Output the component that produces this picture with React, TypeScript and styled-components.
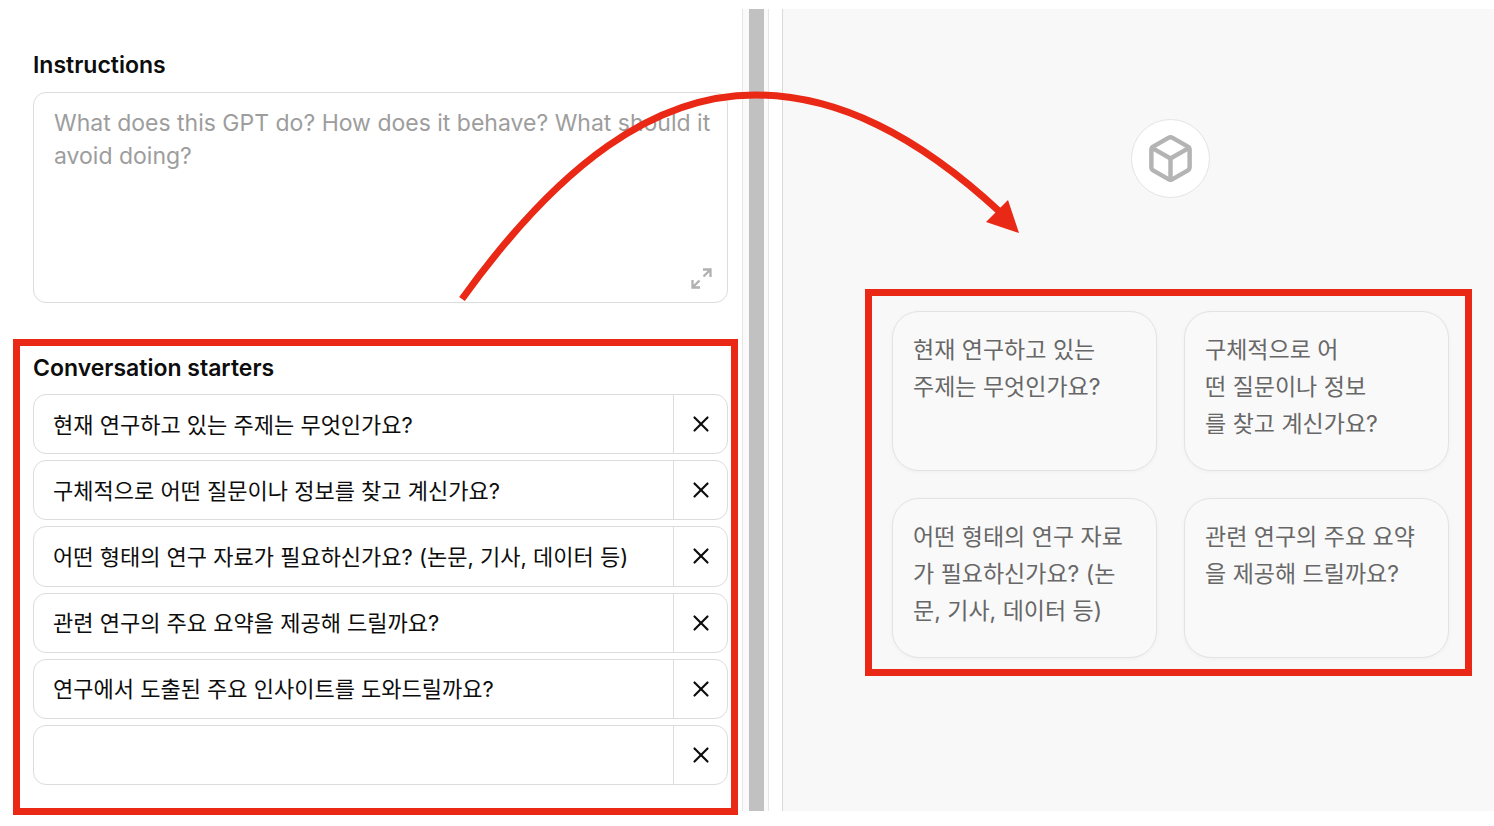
import React, { useState } from "react";
import styled, { createGlobalStyle } from "styled-components";
import { Box, X } from "lucide-react";

const RED = "#e92815";
const LINE = "#dcdcdc";

const GlobalStyle = createGlobalStyle`
  *, *::before, *::after { box-sizing: border-box; }
  body {
    margin: 0;
    background: #fff;
    color: #0d0d0d;
    font-family: Inter, "Noto Sans CJK KR", sans-serif;
  }
  button, input, textarea { font: inherit; color: inherit; margin: 0; }
`;

const Page = styled.main`
  position: relative;
  display: grid;
  grid-template-columns: minmax(0, 742fr) 27px 13px minmax(0, 712fr);
  min-height: 100vh;
  padding: 9px 0 11px;
  overflow: hidden;
`;

const Editor = styled.section`
  display: flex;
  flex-direction: column;
  padding: 40px 4px 0 13px;
`;

const Label = styled.label`
  display: block;
  font-size: 23px;
  font-weight: 600;
  line-height: 32px;
`;

const Heading = styled.h2`
  margin: 0;
  font-size: 23px;
  font-weight: 600;
  line-height: 32px;
`;

const InstructionsField = styled.div`
  position: relative;
  display: flex;
  flex-direction: column;
  gap: 11px;
  margin: 0 10px 36px 20px;
`;

const TextArea = styled.textarea`
  display: block;
  width: 100%;
  height: 211px;
  padding: 14px 8px 14px 20px;
  border: 1px solid ${LINE};
  border-radius: 13px;
  background: #fff;
  resize: none;
  outline: none;
  font-size: 23px;
  line-height: 33px;
  &::placeholder { color: #9d9d9d; opacity: 1; }
`;

const ExpandButton = styled.button`
  position: absolute;
  right: 15px;
  bottom: 13px;
  display: flex;
  padding: 0;
  border: 0;
  background: none;
  color: #b1b1b1;
`;

const Highlight = styled.section`
  border: 7px solid ${RED};
`;

const Starters = styled(Highlight)`
  flex: 1;
  display: flex;
  flex-direction: column;
  gap: 10px;
  padding: 6px 3px 23px 13px;
`;

const StarterList = styled.ul`
  flex: 1;
  display: flex;
  flex-direction: column;
  gap: 6px;
  margin: 0;
  padding: 0;
  list-style: none;
`;

const StarterRow = styled.li`
  flex: 1;
  display: flex;
  min-height: 60px;
  border: 1px solid ${LINE};
  border-radius: 13px;
  overflow: hidden;
`;

const StarterInput = styled.input`
  flex: 1;
  min-width: 0;
  padding: 0 19px 3px;
  border: 0;
  outline: none;
  background: none;
  font-size: 22px;
`;

const RemoveButton = styled.button`
  display: flex;
  align-items: center;
  justify-content: center;
  width: 54px;
  padding: 0;
  border: 0;
  border-left: 1px solid ${LINE};
  background: none;
`;

const Track = styled.div`
  margin-bottom: 4px;
  padding: 0 4px 0 6px;
  border: 1px solid #e6e6e6;
  border-width: 0 1px;
  background: #fafafa;
`;

const Thumb = styled.div`
  height: 100%;
  background: #c1c1c1;
`;

const Preview = styled.section`
  grid-column: 4;
  margin-bottom: 4px;
  padding: 110px 22px 0 82px;
  border-left: 1px solid #dadada;
  background: #f8f8f8;
`;

const AvatarRow = styled.div`
  display: flex;
  justify-content: center;
  padding: 0 23px 91px 27px;
`;

const Avatar = styled.div`
  display: flex;
  align-items: center;
  justify-content: center;
  width: 79px;
  height: 79px;
  border: 1px solid #e4e4e4;
  border-radius: 50%;
  background: #fff;
  color: #b4b4b4;
`;

const Suggestions = styled(Highlight)`
  display: grid;
  grid-template-columns: repeat(2, minmax(0, 1fr));
  gap: 27px;
  padding: 15px 16px 11px 20px;
`;

const Card = styled.button`
  display: flex;
  align-items: flex-start;
  min-height: 160px;
  padding: 20px;
  border: 1px solid #e3e3e3;
  border-radius: 27px;
  background: #f9f9f9;
  box-shadow: 0 1px 4px rgba(0, 0, 0, 0.04);
  color: #676767;
  font-size: 23px;
  line-height: 37px;
  text-align: left;
  white-space: pre;
`;

const Arrow = styled.svg`
  position: absolute;
  top: 0;
  left: 0;
  pointer-events: none;
`;

const initialStarters = [
  "현재 연구하고 있는 주제는 무엇인가요?",
  "구체적으로 어떤 질문이나 정보를 찾고 계신가요?",
  "어떤 형태의 연구 자료가 필요하신가요? (논문, 기사, 데이터 등)",
  "관련 연구의 주요 요약을 제공해 드릴까요?",
  "연구에서 도출된 주요 인사이트를 도와드릴까요?",
  "",
];

const cards = [
  "현재 연구하고 있는\n주제는 무엇인가요?",
  "구체적으로 어\n떤 질문이나 정보\n를 찾고 계신가요?",
  "어떤 형태의 연구 자료\n가 필요하신가요? (논\n문, 기사, 데이터 등)",
  "관련 연구의 주요 요약\n을 제공해 드릴까요?",
];

export default function App() {
  const [starters, setStarters] = useState(initialStarters);

  const update = (index: number, value: string) =>
    setStarters(starters.map((s, i) => (i === index ? value : s)));
  const remove = (index: number) =>
    setStarters(starters.filter((_, i) => i !== index));

  return (
    <>
      <GlobalStyle />
      <Page>
        <Editor>
          <InstructionsField>
            <Label htmlFor="instructions">Instructions</Label>
            <TextArea
              id="instructions"
              placeholder="What does this GPT do? How does it behave? What should it avoid doing?"
            />
            <ExpandButton type="button" aria-label="Expand">
              <svg width="23" height="23" viewBox="0 0 23 23" fill="none" stroke="currentColor" strokeWidth="2.3">
                <path d="M13 2.5H20.5V10M20.5 2.5L13.5 9.5M2.5 13V20.5H10M2.5 20.5L9.5 13.5" />
              </svg>
            </ExpandButton>
          </InstructionsField>

          <Starters>
            <Heading id="starters">Conversation starters</Heading>
            <StarterList aria-labelledby="starters">
              {starters.map((text, i) => (
                <StarterRow key={i}>
                  <StarterInput
                    aria-label={`Conversation starter ${i + 1}`}
                    value={text}
                    onChange={(e) => update(i, e.target.value)}
                  />
                  <RemoveButton type="button" aria-label="Remove" onClick={() => remove(i)}>
                    <X size={26} />
                  </RemoveButton>
                </StarterRow>
              ))}
            </StarterList>
          </Starters>
        </Editor>

        <Track>
          <Thumb />
        </Track>

        <Preview>
          <AvatarRow>
            <Avatar>
              <Box size={51} strokeWidth={2.1} />
            </Avatar>
          </AvatarRow>
          <Suggestions>
            {cards.map((text) => (
              <Card key={text} type="button">
                {text}
              </Card>
            ))}
          </Suggestions>
        </Preview>

        <Arrow width="1040" height="320" viewBox="0 0 1040 320" aria-hidden="true">
          <path
            d="M462 299C560 163 655 95 755 95C838 95 918 136 1000 212"
            fill="none"
            stroke={RED}
            strokeWidth="7"
          />
          <path d="M1019 233L986 222L1008 200Z" fill={RED} />
        </Arrow>
      </Page>
    </>
  );
}
